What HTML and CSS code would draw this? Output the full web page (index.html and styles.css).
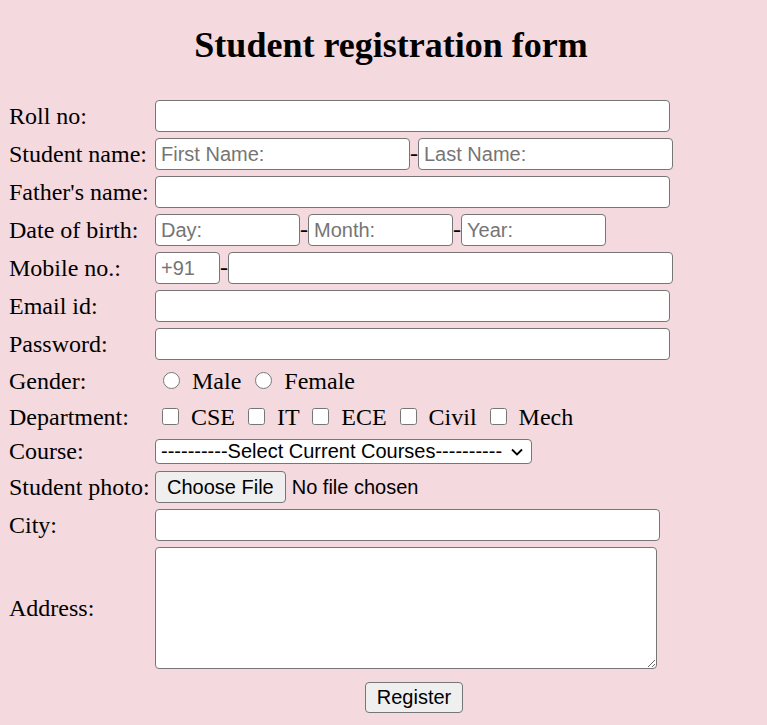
FILE: index.html
```html
<!DOCTYPE html>
<html lang="en">
<head>
<meta charset="utf-8">
<title>Student registration form</title>
<link rel="stylesheet" href="styles.css">
</head>
<body>
<h1 class="title">Student registration form</h1>
<form class="form">
  <label class="lbl">Roll no:</label>
  <div class="field"><input class="txt w-full" type="text"></div>

  <label class="lbl">Student name:</label>
  <div class="field"><input class="txt w-half" type="text" placeholder="First Name:">-<input class="txt w-half" type="text" placeholder="Last Name:"></div>

  <label class="lbl">Father's name:</label>
  <div class="field"><input class="txt w-full" type="text"></div>

  <label class="lbl">Date of birth:</label>
  <div class="field"><input class="txt w-third" type="text" placeholder="Day:">-<input class="txt w-third" type="text" placeholder="Month:">-<input class="txt w-third" type="text" placeholder="Year:"></div>

  <label class="lbl">Mobile no.:</label>
  <div class="field"><input class="txt w-code" type="text" placeholder="+91">-<input class="txt w-phone" type="text"></div>

  <label class="lbl">Email id:</label>
  <div class="field"><input class="txt w-full" type="email"></div>

  <label class="lbl">Password:</label>
  <div class="field"><input class="txt w-full" type="password"></div>

  <label class="lbl">Gender:</label>
  <div class="choices gender"><input class="opt" type="radio" name="g"> Male <input class="opt" type="radio" name="g"> Female</div>

  <label class="lbl">Department:</label>
  <div class="choices dept"><input class="opt box" type="checkbox"> CSE <input class="opt box" type="checkbox"> IT <input class="opt box" type="checkbox"> ECE <input class="opt box" type="checkbox"> Civil <input class="opt box" type="checkbox"> Mech</div>

  <label class="lbl">Course:</label>
  <div class="field sel-row">
    <span class="sel-wrap">
      <select class="sel"><option>----------Select Current Courses----------</option></select>
      <svg class="chev" width="12" height="8" viewBox="0 0 12 8" aria-hidden="true"><polyline points="1,1.5 6,6.5 11,1.5" fill="none" stroke="#000" stroke-width="1.8"/></svg>
    </span>
  </div>

  <label class="lbl">Student photo:</label>
  <div class="field"><input class="file" type="file"></div>

  <label class="lbl">City:</label>
  <div class="field"><input class="txt w-city" type="text"></div>

  <label class="lbl">Address:</label>
  <div class="field"><textarea class="area"></textarea></div>

  <div class="submit-row"><button class="btn" type="button">Register</button></div>
</form>
</body>
</html>
```
FILE: styles.css
```css
html, body {
  background: #f4d9de;
}
body {
  margin: 8px;
  font-family: "Liberation Serif", "Times New Roman", serif;
  font-size: 24px;
  color: #000;
}
.title {
  margin: 16px 0 34px;
  padding-left: 15px;
  font-size: 36px;
  line-height: 42px;
  font-weight: bold;
  text-align: center;
}
.form {
  display: grid;
  grid-template-columns: 147px 518px;
  row-gap: 6px;
  align-items: center;
}
.lbl {
  padding-left: 1px;
  white-space: nowrap;
}
.field {
  display: flex;
  align-items: baseline;
}
.txt {
  box-sizing: border-box;
  height: 32px;
  padding: 0 5px;
  border: 1px solid #767676;
  border-radius: 4px;
  background: #fff;
  font-family: "Liberation Sans", Arial, sans-serif;
  font-size: 20px;
  margin: 0;
}
.txt::placeholder {
  color: #757575;
}
.w-full { width: 515px; }
.w-half { width: 255px; }
.w-third { width: 145px; }
.w-code { width: 65px; }
.w-phone { width: 445px; }
.w-city { width: 505px; }
.choices {
  line-height: 30px;
  white-space: nowrap;
}
.opt {
  width: 17px;
  height: 17px;
  margin: 0 6px 0 8px;
  vertical-align: baseline;
}
.opt.box {
  margin: 0 6px 0 7px;
}
.sel-row {
  height: 26px;
  align-items: flex-start;
}
.sel-wrap {
  position: relative;
  display: block;
  width: 377px;
  height: 25px;
}
.sel {
  appearance: none;
  -webkit-appearance: none;
  box-sizing: border-box;
  display: block;
  width: 377px;
  height: 25px;
  margin: 0;
  padding: 0 0 0 5px;
  border: 1px solid #767676;
  border-radius: 4px;
  background: #fff;
  color: #000;
  font-family: "Liberation Sans", Arial, sans-serif;
  font-size: 20px;
  line-height: 23px;
}
.chev {
  position: absolute;
  right: 9px;
  top: 9px;
  pointer-events: none;
}
.file {
  font-family: "Liberation Sans", Arial, sans-serif;
  font-size: 20px;
  margin: 0;
}
.file::file-selector-button {
  height: 32px;
  padding: 0 11px;
  margin: 0 6px 0 0;
  border: 1px solid #767676;
  border-radius: 4px;
  background: #efefef;
  color: #000;
  font-family: "Liberation Sans", Arial, sans-serif;
  font-size: 20px;
}
.area {
  box-sizing: border-box;
  width: 502px;
  height: 122px;
  margin: 0;
  border: 1px solid #767676;
  border-radius: 4px;
  background: #fff;
  display: block;
}
.submit-row {
  grid-column: 2;
  display: flex;
  justify-content: center;
  margin-top: 7px;
}
.btn {
  height: 31px;
  padding: 0 11px;
  margin: 0;
  border: 1px solid #767676;
  border-radius: 4px;
  background: #efefef;
  color: #000;
  font-family: "Liberation Sans", Arial, sans-serif;
  font-size: 20px;
}
```
